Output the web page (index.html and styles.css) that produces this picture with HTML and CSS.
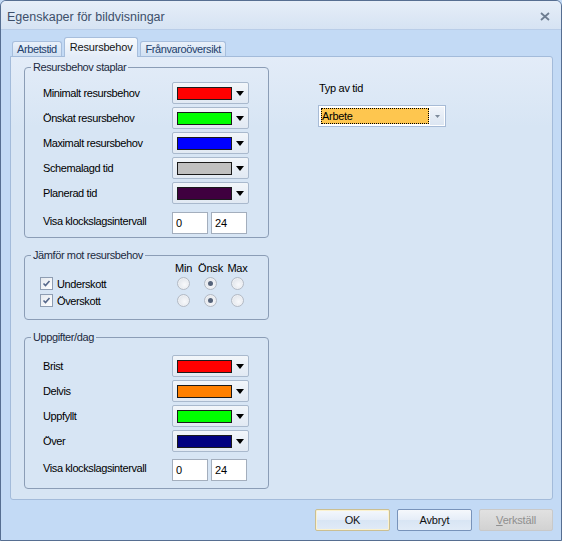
FILE: index.html
```html
<!DOCTYPE html>
<html lang="sv">
<head>
	<meta charset="UTF-8">
	<title>Egenskaper för bildvisningar</title>
	<link rel="stylesheet" href="styles.css">
</head>
<body>
	<div class="window">
		<div class="titlebar">
			<span class="title">Egenskaper för bildvisningar</span>
			<svg class="close" width="10" height="9" viewBox="0 0 10 9"><path d="M1 1 L9 8 M9 1 L1 8" stroke="#6e7d91" stroke-width="1.8" fill="none"/></svg>
		</div>
		<div class="content">
			<div class="tabs">
				<span class="tab">Arbetstid</span>
				<span class="tab active">Resursbehov</span>
				<span class="tab">Frånvaroöversikt</span>
			</div>
			<div class="panel">
				<div class="col-left">
					<!-- Resursbehov staplar -->
					<fieldset class="group g-bars">
						<legend>Resursbehov staplar</legend>
						<div class="row"><label>Minimalt resursbehov</label><div class="combo"><span class="swatch c-red"></span><span class="arrow"></span></div></div>
						<div class="row"><label>Önskat resursbehov</label><div class="combo"><span class="swatch c-green"></span><span class="arrow"></span></div></div>
						<div class="row"><label>Maximalt resursbehov</label><div class="combo"><span class="swatch c-blue"></span><span class="arrow"></span></div></div>
						<div class="row"><label>Schemalagd tid</label><div class="combo"><span class="swatch c-silver"></span><span class="arrow"></span></div></div>
						<div class="row"><label>Planerad tid</label><div class="combo"><span class="swatch c-purple"></span><span class="arrow"></span></div></div>
						<div class="row row-range"><label>Visa klockslagsintervall</label><input class="num" type="text" value="0"><input class="num" type="text" value="24"></div>
					</fieldset>
					<!-- Jämför mot resursbehov -->
					<fieldset class="group g-compare">
						<legend>Jämför mot resursbehov</legend>
						<div class="cmp-grid">
							<span></span><span class="hd">Min</span><span class="hd">Önsk</span><span class="hd">Max</span>
							<span class="chk-label"><span class="chk"><svg width="11" height="11" viewBox="0 0 11 11"><path d="M2.5 5.5 L4.5 7.5 L8.5 3" stroke="#55678a" stroke-width="1.6" fill="none"/></svg></span>Underskott</span>
							<span class="cell"><span class="radio"></span></span><span class="cell"><span class="radio on"></span></span><span class="cell"><span class="radio"></span></span>
							<span class="chk-label"><span class="chk"><svg width="11" height="11" viewBox="0 0 11 11"><path d="M2.5 5.5 L4.5 7.5 L8.5 3" stroke="#55678a" stroke-width="1.6" fill="none"/></svg></span>Överskott</span>
							<span class="cell"><span class="radio"></span></span><span class="cell"><span class="radio on"></span></span><span class="cell"><span class="radio"></span></span>
						</div>
					</fieldset>
					<!-- Uppgifter/dag -->
					<fieldset class="group g-tasks">
						<legend>Uppgifter/dag</legend>
						<div class="row"><label>Brist</label><div class="combo"><span class="swatch c-red"></span><span class="arrow"></span></div></div>
						<div class="row"><label>Delvis</label><div class="combo"><span class="swatch c-orange"></span><span class="arrow"></span></div></div>
						<div class="row"><label>Uppfyllt</label><div class="combo"><span class="swatch c-green"></span><span class="arrow"></span></div></div>
						<div class="row"><label>Över</label><div class="combo"><span class="swatch c-navy"></span><span class="arrow"></span></div></div>
						<div class="row row-range"><label>Visa klockslagsintervall</label><input class="num" type="text" value="0"><input class="num" type="text" value="24"></div>
					</fieldset>
				</div>
				<div class="col-right">
					<div class="typ-label">Typ av tid</div>
					<div class="select">
						<span class="sel-value">Arbete</span>
						<span class="sel-btn"><svg width="5" height="3" viewBox="0 0 5 3"><path d="M0 0 H5 L2.5 3 Z" fill="#7d8a9b"/></svg></span>
					</div>
				</div>
			</div>
			<div class="buttons">
				<button class="btn btn-default" type="button">OK</button>
				<button class="btn" type="button">Avbryt</button>
				<button class="btn btn-apply" type="button" disabled><u>V</u>erkställ</button>
			</div>
		</div>
	</div>
</body>
</html>
```

FILE: styles.css
```css
/* Reset */
body{ margin:0; padding:0; font-family:"Liberation Sans", Arial, sans-serif; font-size:11px; color:#000; background:#c3daf5;}
fieldset,legend{ margin:0; padding:0;}
/* 窗口 */
.window{
	width: 562px;
	height: 541px;
	box-sizing: border-box;
	border: 1px solid #566e91;
	border-radius: 6px 6px 0 0;
	background: #c3daf5;
	display: flex;
	flex-direction: column;
	overflow: hidden;
}
.titlebar{
	flex: none;
	display: flex;
	align-items: center;
	justify-content: space-between;
	padding: 3px 11px 0 6px;
	box-sizing: border-box;
	height: 29px;
	background: linear-gradient(#e6eef8, #d6e3f3);
	border-bottom: 1px solid #b9cde8;
}
.title{
	font-size: 12.5px;
	color: #3d4f6a;
}
.content{
	flex: 1;
	display: flex;
	flex-direction: column;
	padding: 0 8px 0 9px;
}
/* 标签页 */
.tabs{
	height: 26px;
	flex: none;
	display: flex;
	align-items: flex-end;
	padding-left: 2px;
}
.tab{
	height: 14px;
	line-height: 14px;
	padding: 0 4px;
	margin-right: 2px;
	border: 1px solid #a7bedc;
	border-bottom: none;
	border-radius: 3px 3px 0 0;
	background: linear-gradient(#eaf1fa, #d0e0f3);
	color: #22406b;
	letter-spacing: -0.4px;
}
.tab.active{
	height: 19px;
	line-height: 18px;
	margin-bottom: -1px;
	position: relative;
	z-index: 1;
	background: linear-gradient(#f7fafd, #e3ecf8);
	color: #141414;
	padding: 0 5px;
	letter-spacing: -0.2px;
}
.panel{
	height: 444px;
	flex: none;
	box-sizing: border-box;
	border: 1px solid #a3bbda;
	border-radius: 0 3px 3px 3px;
	background: linear-gradient(#e3ecf8, #d7e5f4 70px, #d7e5f4);
	padding: 4px 0 0 13px;
	display: flex;
	gap: 49px;
}
.col-left{
	width: 245px;
	display: flex;
	flex-direction: column;
}
/* 分组框 */
.group{
	border: 1px solid #8b9db6;
	border-radius: 4px;
	min-width: 0;
	display: flex;
	flex-direction: column;
	gap: 3px;
	letter-spacing: -0.4px;
}
.group legend{
	padding: 0 2px;
	line-height: 13px;
	color: #1c2a40;
}
.g-bars{ padding: 8px 0 3px 18px;}
.g-bars legend,.g-tasks legend{ margin-left: -12px;}
.g-compare{ padding: 0 0 10px 15px; margin-top: 11px;}
.g-compare legend{ margin-left: -9px;}
.g-tasks{ padding: 11px 0 7px 18px; margin-top: 11px;}
.row{
	display: flex;
	align-items: center;
	height: 22px;
}
.row label{
	width: 129px;
	flex: none;
}
.row-range{ margin-top: 5px;}
.g-tasks .row-range{ margin-top: 4px;}
.row-range label{ margin-bottom: 5px;}
/* 颜色下拉 */
.combo{
	width: 77px;
	height: 22px;
	box-sizing: border-box;
	border: 1px solid #a9b9cd;
	border-radius: 2px;
	background: linear-gradient(#f2f6fa, #e1e9f3);
	display: flex;
	align-items: center;
	padding-left: 4px;
}
.swatch{
	width: 55px;
	height: 13px;
	box-sizing: border-box;
	border: 1px solid #1a1a1a;
}
.arrow{
	margin-left: 4px;
	width: 0;
	height: 0;
	border-top: 5px solid #000;
	border-left: 4.5px solid transparent;
	border-right: 4.5px solid transparent;
}
.c-red{ background: #ff0000;}
.c-green{ background: #00ff00;}
.c-blue{ background: #0000ff;}
.c-silver{ background: #c0c0c0;}
.c-purple{ background: #3f003f;}
.c-orange{ background: #ff8000;}
.c-navy{ background: #000080;}
.num{
	width: 36px;
	height: 22px;
	box-sizing: border-box;
	border: 1px solid #a3aebd;
	background: #fff;
	font: inherit;
	letter-spacing: 0;
	padding: 0 0 0 3px;
	margin: 0 3px 0 0;
	outline: none;
}
/* 对比 */
.cmp-grid{
	display: grid;
	grid-template-columns: 130px 27px 27px 27px;
	grid-template-rows: 13px 17px 17px;
	align-items: center;
}
.hd{
	text-align: center;
	line-height: 13px;
	letter-spacing: -0.2px;
}
.chk-label{
	display: flex;
	align-items: center;
	gap: 4px;
}
.chk{
	width: 13px;
	height: 13px;
	box-sizing: border-box;
	border: 1px solid #8e9db2;
	background: linear-gradient(135deg, #e4e9ef, #fff);
	display: flex;
	align-items: center;
	justify-content: center;
}
.cell{
	display: flex;
	justify-content: center;
}
.radio{
	width: 13px;
	height: 13px;
	box-sizing: border-box;
	border-radius: 50%;
	border: 1px solid #b3bac4;
	background: radial-gradient(circle at 60% 60%, #f8f9fb, #d9dee5);
	box-shadow: inset 0 0 0 1px #eef0f3;
	display: flex;
	align-items: center;
	justify-content: center;
}
.radio.on::after{
	content: "";
	width: 5px;
	height: 5px;
	border-radius: 50%;
	background: #55637a;
}
/* 右侧 */
.col-right{
	padding-top: 21px;
}
.typ-label{
	line-height: 13px;
	padding-left: 1px;
	letter-spacing: -0.3px;
}
.select{
	margin-top: 10px;
	width: 128px;
	height: 22px;
	box-sizing: border-box;
	border: 1px solid #a7bbd6;
	background: #fff;
	padding: 2px;
	display: flex;
}
.sel-value{
	width: 108px;
	box-sizing: border-box;
	border: 1px dotted #000;
	background: #fec64f;
	line-height: 14px;
	letter-spacing: -0.3px;
}
.sel-btn{
	flex: 1;
	margin: -1px -1px -1px 1px;
	background: linear-gradient(#f0f4fa, #dce6f2);
	display: flex;
	align-items: center;
	justify-content: center;
}
/* 按钮 */
.buttons{
	display: flex;
	justify-content: flex-end;
	gap: 7px;
	margin-top: 9px;
}
.btn{
	width: 75px;
	height: 22px;
	box-sizing: border-box;
	border: 1px solid #7893ba;
	border-radius: 2px;
	background: linear-gradient(#f5f8fc, #e5edf8 50%, #d8e5f4 51%, #e1ebf7);
	font: inherit;
	letter-spacing: -0.2px;
	color: #111;
	padding: 0;
}
.btn-default{
	border-color: #cbbf92;
	box-shadow: inset 0 0 0 1px #fbf2cf;
}
.btn-apply{
	width: 74px;
	border-color: #c9c9c9;
	background: linear-gradient(#e1e1e1, #d2d2d2);
	color: #8f8f8f;
}
```
